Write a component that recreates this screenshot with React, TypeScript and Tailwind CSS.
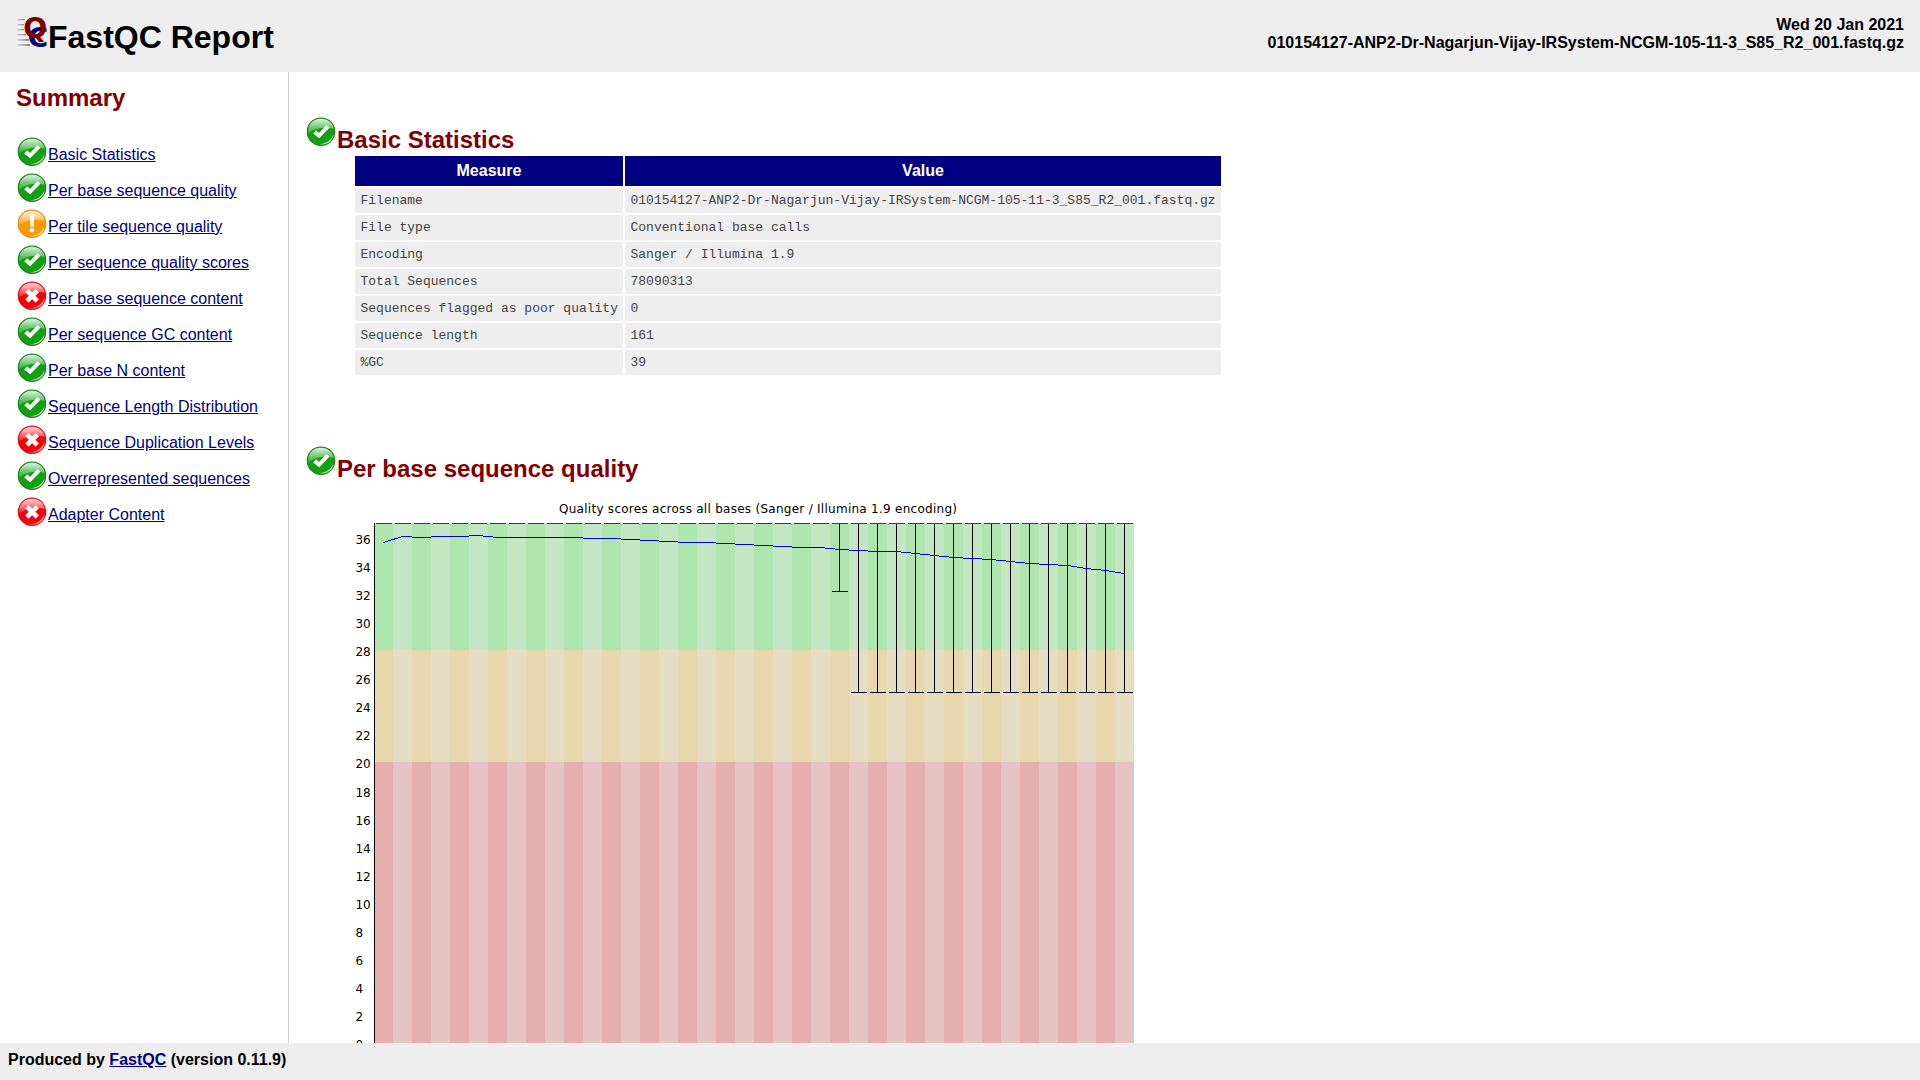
import React from "react";

type Status = "pass" | "warn" | "fail";

const modules: { name: string; status: Status }[] = [
  { name: "Basic Statistics", status: "pass" },
  { name: "Per base sequence quality", status: "pass" },
  { name: "Per tile sequence quality", status: "warn" },
  { name: "Per sequence quality scores", status: "pass" },
  { name: "Per base sequence content", status: "fail" },
  { name: "Per sequence GC content", status: "pass" },
  { name: "Per base N content", status: "pass" },
  { name: "Sequence Length Distribution", status: "pass" },
  { name: "Sequence Duplication Levels", status: "fail" },
  { name: "Overrepresented sequences", status: "pass" },
  { name: "Adapter Content", status: "fail" },
];

const stats: [string, string][] = [
  ["Filename", "010154127-ANP2-Dr-Nagarjun-Vijay-IRSystem-NCGM-105-11-3_S85_R2_001.fastq.gz"],
  ["File type", "Conventional base calls"],
  ["Encoding", "Sanger / Illumina 1.9"],
  ["Total Sequences", "78090313"],
  ["Sequences flagged as poor quality", "0"],
  ["Sequence length", "161"],
  ["%GC", "39"],
];

const palette = {
  pass: { fill: "#12a012", edge: "#1c841c" },
  warn: { fill: "#ff9900", edge: "#dc8a14" },
  fail: { fill: "#fb0007", edge: "#cf1717" },
};

function StatusIcon({ status }: { status: Status }) {
  const { fill, edge } = palette[status];
  const id = React.useId();
  return (
    <svg width="32" height="32" viewBox="0 0 32 32" className="block shrink-0">
      <defs>
        <linearGradient id={id} x1="0" y1="0" x2="0" y2="1">
          <stop offset="0" stopColor="#fff" stopOpacity="0.85" />
          <stop offset="1" stopColor="#fff" stopOpacity="0.12" />
        </linearGradient>
      </defs>
      <circle cx="16" cy="15.7" r="13.7" fill={fill} stroke={edge} strokeWidth="1.2" />
      <path d="M3.3 17.2C2.2 8.5 8 2.800 16 2.800C23 2.800 28.300 7.500 28.700 13C20 10.500 11 12 3.300 17.200Z" fill={`url(#${id})`} />
      <path d="M14 28.200C21 28 26.500 24 28.500 18C28.500 24 23 29.800 14 28.200Z" fill="#fff" fillOpacity="0.65" />
      {status === "pass" && <path d="M8.200 17.400L11.200 14.300L14 17L21.400 9.200L24.400 11.800L14.200 22.300Z" fill="#fff" />}
      {status === "warn" && (
        <g fill="#fff">
          <path d="M13.700 6.500H18.300L17.700 18.700H14.300Z" />
          <circle cx="16" cy="22.300" r="2.300" />
        </g>
      )}
      {status === "fail" && <path d="M10.900 10.600L21.300 21M21.300 10.600L10.900 21" stroke="#fff" strokeWidth="4.600" />}
    </svg>
  );
}

function Logo() {
  return (
    <svg width="32" height="32" viewBox="0 0 32 32" className="block shrink-0 overflow-visible">
      <defs>
        <linearGradient id="speed" gradientUnits="userSpaceOnUse" x1="0" y1="0" x2="13" y2="0">
          <stop offset="0" stopColor="#ddd" />
          <stop offset="1" stopColor="#555" />
        </linearGradient>
      </defs>
      <g fill="url(#speed)">
        <rect x="1" y="3" width="8" height="1.3" />
        <rect x="1" y="8" width="7" height="1.3" />
        <rect x="1" y="13" width="7" height="1.3" />
        <rect x="1" y="18" width="9" height="1.3" />
        <rect x="1" y="23.300" width="12" height="1.3" />
        <rect x="1" y="28.300" width="13" height="1.3" />
      </g>
      <text x="11.800" y="31" fontSize="27" textLength="20.500" lengthAdjust="spacingAndGlyphs" className="font-['DejaVu_Sans',sans-serif] font-bold" fill="#000080">C</text>
      <text x="7.300" y="21.900" fontSize="28" textLength="24" lengthAdjust="spacingAndGlyphs" className="font-['DejaVu_Sans',sans-serif] font-bold" fill="#800000">Q</text>
    </svg>
  );
}

const bandWidth = 19;
const columns = Array.from({ length: 40 }, (_, i) => 19 + i * bandWidth);
const zones = [
  { y: 18, height: 127, dark: "#afe6af", light: "#c3e6c3" },
  { y: 145, height: 112, dark: "#e6d7af", light: "#e6dcc3" },
  { y: 257, height: 290, dark: "#e6afaf", light: "#e6c3c3" },
];
const means = [
  37, 31, 32, 31, 31, 30, 32, 32, 32, 32, 32, 33, 33, 34, 35, 36, 37, 37, 38, 39,
  40, 41, 42, 42, 44, 45, 46, 46, 48, 50, 52, 53, 54, 56, 58, 59, 60, 63, 65, 68,
];
const ticks = Array.from({ length: 19 }, (_, i) => i * 2);

function QualityChart() {
  return (
    <svg width="800" height="600" viewBox="0 0 800 600" shapeRendering="crispEdges" className="block shrink-0 overflow-visible font-['DejaVu_Sans',sans-serif] text-[12px]">
      {zones.map((z) =>
        columns.map((x, i) => (
          <rect key={`${z.y}-${x}`} x={x} y={z.y} width={bandWidth} height={z.height} fill={i % 2 ? z.light : z.dark} />
        ))
      )}
      {columns.map((x, i) => {
        const low = i === 24 ? 86 : i > 24 ? 187 : 18;
        return (
          <g key={x}>
            {i >= 24 && <rect x={x + 9} y={18} width="1" height={low - 18} fill="#000" />}
            {i >= 24 && <rect x={x + 2} y={low} width="16" height="1" fill="#000" />}
            <rect x={x + 2} y={18} width="16" height="1" fill="#c80000" />
          </g>
        );
      })}
      <polyline points={means.map((y, i) => `${columns[i] + 9.5},${y + 0.5}`).join(" ")} fill="none" stroke="#0000c8" strokeWidth="1" />
      <rect x="19" y="18" width="1" height="529" fill="#000" />
      {ticks.map((t) => (
        <text key={t} x="0.4" y={(t <= 18 ? 544 : 543) - t * 14}>{t}</text>
      ))}
      <text x="204" y="8" textLength="398">Quality scores across all bases (Sanger / Illumina 1.9 encoding)</text>
    </svg>
  );
}

function ModuleHeading({ status, children }: { status: Status; children: React.ReactNode }) {
  return (
    <h2 className="flex h-10 text-2xl leading-7 font-bold text-[#800000]">
      <StatusIcon status={status} />
      <span className="pt-[10px]">{children}</span>
    </h2>
  );
}

export default function App() {
  return (
    <div className="flex h-screen flex-col overflow-hidden bg-white font-['Liberation_Sans',Arial,sans-serif] text-base text-black">
      <header className="flex h-[72px] shrink-0 justify-between bg-[#eee] px-4 font-bold">
        <div className="flex pt-4">
          <Logo />
          <h1 className="pt-px text-[32px] leading-[40px]">FastQC Report</h1>
        </div>
        <div className="pt-4 text-right leading-[18px]">
          <div>Wed 20 Jan 2021</div>
          <div>010154127-ANP2-Dr-Nagarjun-Vijay-IRSystem-NCGM-105-11-3_S85_R2_001.fastq.gz</div>
        </div>
      </header>
      <div className="flex min-h-0 flex-1">
        <nav className="w-[289px] shrink-0 border-r border-[#ccc] pl-4">
          <h2 className="pt-3 text-2xl leading-7 font-bold text-[#800000]">Summary</h2>
          <ul className="pt-6">
            {modules.map((m) => (
              <li key={m.name} className="flex h-9">
                <StatusIcon status={m.status} />
                <a href="#" className="pt-[10px] leading-[18px] text-[#000080] underline">{m.name}</a>
              </li>
            ))}
          </ul>
        </nav>
        <main className="min-w-0 flex-1 overflow-hidden pt-11 pl-4">
          <ModuleHeading status="pass">Basic Statistics</ModuleHeading>
          <div className="ml-[50px] grid w-[866px] grid-cols-[268px_596px] gap-[2px]">
            <div className="h-[30px] bg-[#000080] text-center leading-[30px] font-bold text-white">Measure</div>
            <div className="h-[30px] bg-[#000080] text-center leading-[30px] font-bold text-white">Value</div>
            {stats.map(([k, v]) => (
              <React.Fragment key={k}>
                <div className="h-[25px] bg-[#eee] pl-[5.5px] font-['Liberation_Mono',monospace] text-[13px] leading-[25px] whitespace-pre text-[#444]">{k}</div>
                <div className="h-[25px] bg-[#eee] pl-[5.5px] font-['Liberation_Mono',monospace] text-[13px] leading-[25px] whitespace-pre text-[#444]">{v}</div>
              </React.Fragment>
            ))}
          </div>
          <div className="pt-[70px]">
            <ModuleHeading status="pass">Per base sequence quality</ModuleHeading>
            <div className="ml-[50px] pt-5">
              <QualityChart />
            </div>
          </div>
        </main>
      </div>
      <footer className="h-[37px] shrink-0 bg-[#eee] pt-2 pl-2 leading-[18px] font-bold">
        Produced by <a href="#" className="text-[#000080] underline">FastQC</a> (version 0.11.9)
      </footer>
    </div>
  );
}
